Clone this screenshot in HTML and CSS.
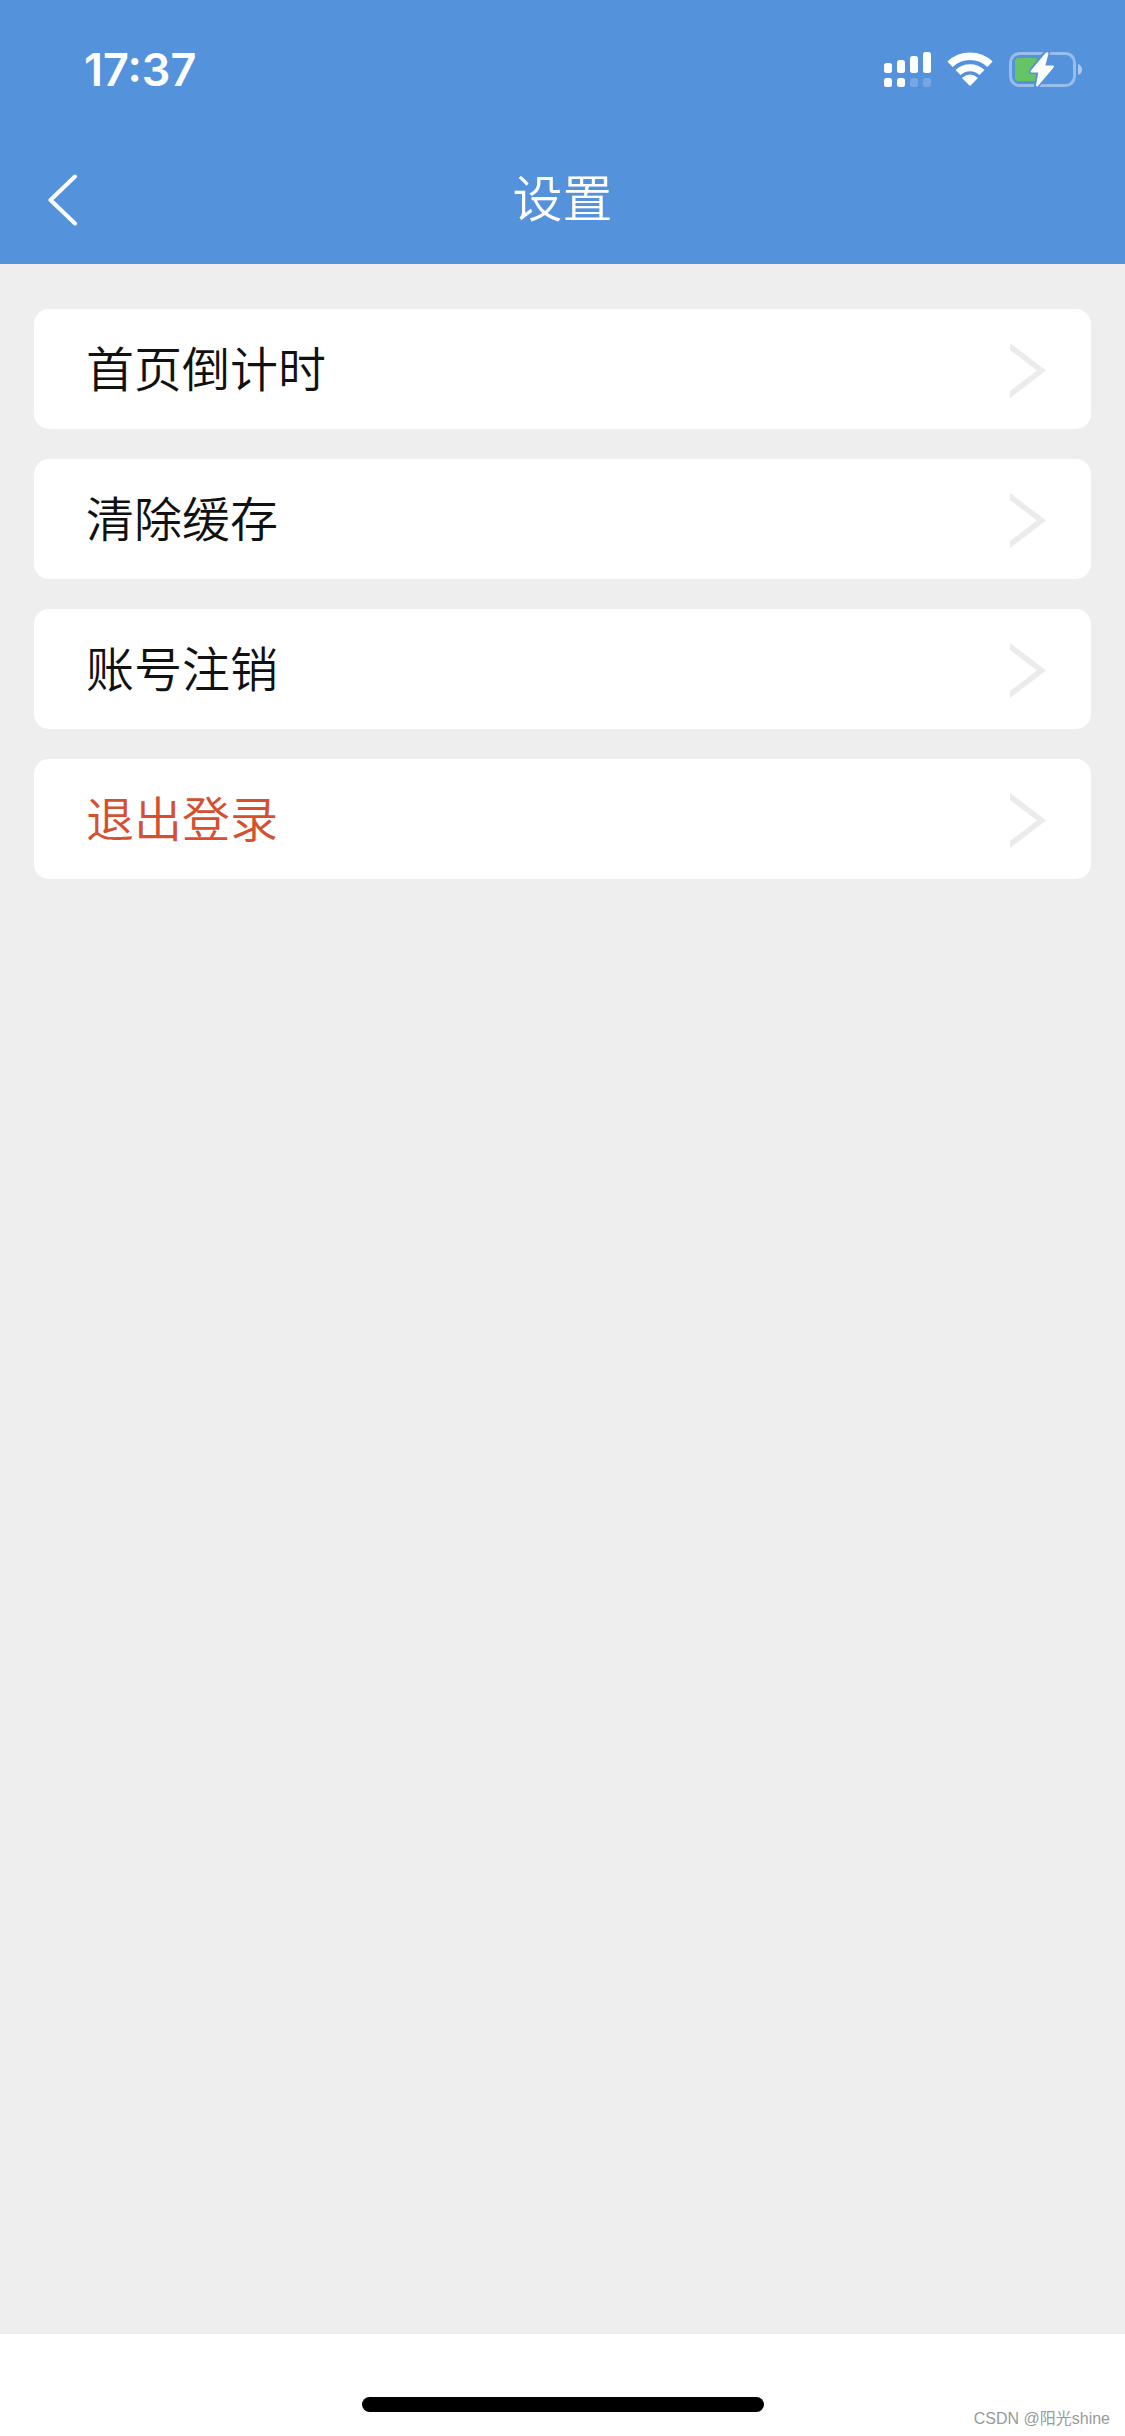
FILE: index.html
```html
<!DOCTYPE html>
<html lang="zh-CN">
<head>
    <meta charset="UTF-8">
    <meta name="viewport" content="width=device-width, initial-scale=1.0">
    <title>设置</title>
    <link rel="stylesheet" href="styles.css">
</head>
<body>
    <header class="header">
        <div class="status-bar">
            <span class="time">17:37</span>
            <div class="status-icons">
                <svg class="signal" width="47" height="36" viewBox="0 0 47 36" fill="#fff" aria-hidden="true">
                    <rect x="0" y="11" width="8" height="10" rx="2.5"/>
                    <rect x="13" y="8" width="8" height="13" rx="2.5"/>
                    <rect x="26" y="4" width="8" height="17" rx="2.5"/>
                    <rect x="39" y="0" width="8" height="21" rx="2.5"/>
                    <rect x="0" y="26" width="8" height="9" rx="2.5"/>
                    <rect x="13" y="26" width="8" height="9" rx="2.5"/>
                    <rect x="26" y="26" width="8" height="9" rx="2.5" opacity="0.2"/>
                    <rect x="39" y="26" width="8" height="9" rx="2.5" opacity="0.2"/>
                </svg>
                <svg class="wifi" width="46" height="36" viewBox="0 0 46 36" aria-hidden="true">
                    <path d="M3 12.2A29 29 0 0 1 43 12.2" fill="none" stroke="#fff" stroke-width="7.6"/>
                    <path d="M11 20.6A17 17 0 0 1 35 20.6" fill="none" stroke="#fff" stroke-width="7"/>
                    <path d="M16 26Q23 20.400 30 26L23 33Z" fill="#fff" stroke="#fff" stroke-width="1.5" stroke-linejoin="round"/>
                </svg>
                <svg class="battery" width="74" height="36" viewBox="0 0 74 36" aria-hidden="true">
                    <rect x="1.5" y="1.5" width="64" height="32" rx="9" fill="none" stroke="#fff" stroke-opacity="0.4" stroke-width="3"/>
                    <path d="M69 12Q73 13.5 73 17.5Q73 21.5 69 23Z" fill="#fff" fill-opacity="0.5"/>
                    <rect x="6" y="6" width="23" height="23" rx="3.5" fill="#65c466"/>
                    <path d="M37 1L22 19.5H30L27.500 34L44 15H34.5L38.5 1Z" fill="#fff" stroke="#5592dc" stroke-width="5" stroke-linejoin="round"/>
                    <path d="M37.5 1.500L22.5 19.5H30.5L28 33.5L44 14.500H35L38.5 1.5Z" fill="#fff" stroke="#fff" stroke-width="2" stroke-linejoin="round"/>
                </svg>
            </div>
        </div>
        <nav class="nav-bar">
            <button type="button" class="back" aria-label="返回">
                <svg width="30" height="52" viewBox="0 0 30 52" aria-hidden="true">
                    <path d="M27 2.5L2.5 26L27 49.5" fill="none" stroke="#fff" stroke-width="4" stroke-linecap="round" stroke-linejoin="round"/>
                </svg>
            </button>
            <h1>设置</h1>
        </nav>
    </header>

    <main class="settings">
        <button type="button" class="item">
            <span>首页倒计时</span>
            <svg class="arrow" width="36" height="56" viewBox="0 0 36 56" aria-hidden="true"><path d="M0 0L36 27.5L0 55V48L27 27.5L0 7Z"/></svg>
        </button>
        <button type="button" class="item">
            <span>清除缓存</span>
            <svg class="arrow" width="36" height="56" viewBox="0 0 36 56" aria-hidden="true"><path d="M0 0L36 27.5L0 55V48L27 27.5L0 7Z"/></svg>
        </button>
        <button type="button" class="item">
            <span>账号注销</span>
            <svg class="arrow" width="36" height="56" viewBox="0 0 36 56" aria-hidden="true"><path d="M0 0L36 27.5L0 55V48L27 27.5L0 7Z"/></svg>
        </button>
        <button type="button" class="item logout">
            <span>退出登录</span>
            <svg class="arrow" width="36" height="56" viewBox="0 0 36 56" aria-hidden="true"><path d="M0 0L36 27.5L0 55V48L27 27.5L0 7Z"/></svg>
        </button>
    </main>

    <footer class="footer">
        <div class="home-indicator"></div>
        <span class="watermark">CSDN @阳光shine</span>
    </footer>
</body>
</html>
```
FILE: styles.css
```css
* { box-sizing: border-box; }
body { font-family: "Liberation Sans", "Noto Sans CJK SC", sans-serif; background: #eee; color: #111; display: flex; flex-direction: column; min-height: 100vh; margin: 0; }
button { font-family: inherit; border: none; cursor: pointer; }
svg { display: block; }

.header { background: #5592dc; color: #fff; }
.status-bar { display: flex; justify-content: space-between; align-items: center; height: 138px; padding: 2px 42px 0 84px; }
.time { font-family: Inter, sans-serif; font-size: 45px; font-weight: 600; line-height: 54px; }
.status-icons { display: flex; align-items: center; gap: 16px; }

.nav-bar { display: grid; grid-template-columns: 1fr auto 1fr; align-items: center; height: 126px; padding: 0 48px 2px; }
.back { justify-self: start; background: none; padding: 0; }
h1 { font-size: 50px; font-weight: 350; line-height: 72px; margin: 0; }

.settings { flex: 1; display: flex; flex-direction: column; gap: 30px; padding: 45px 34px; }
.item { display: flex; justify-content: space-between; align-items: center; height: 120px; padding: 4px 45px 0 52px; background: #fff; border-radius: 15px; color: #111; font-size: 48px; font-weight: 350; line-height: 72px; text-align: left; }
.logout { color: #d4502f; }
.arrow { fill: #ebebeb; }

.footer { position: relative; display: flex; justify-content: center; height: 102px; padding-top: 63px; background: #fff; }
.home-indicator { width: 402px; height: 15px; border-radius: 8px; background: #000; }
.watermark { position: absolute; right: 15px; bottom: 5px; color: #999; font-size: 16px; line-height: 24px; }
```
